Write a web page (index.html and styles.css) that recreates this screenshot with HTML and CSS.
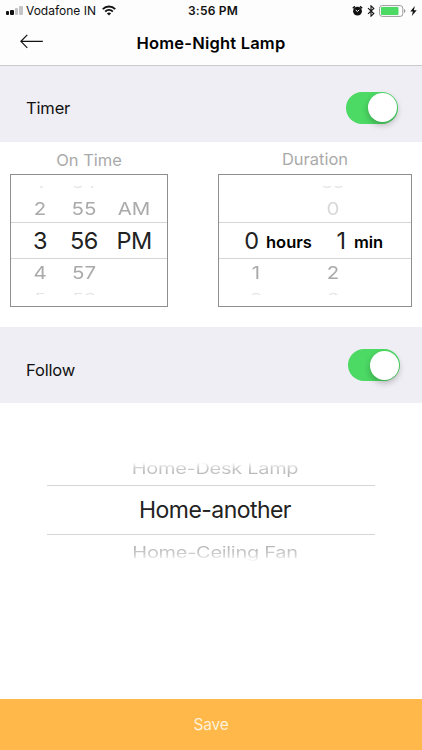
FILE: index.html
```html
<!DOCTYPE html>
<html lang="en">
<head>
<meta charset="utf-8">
<title>Home-Night Lamp</title>
<link rel="stylesheet" href="styles.css">
</head>
<body>
<div class="screen">
  <header class="top">
    <div class="status">
      <div class="status-left">
        <span class="signal"><i></i><i></i><i></i><i></i></span>
        <span class="carrier">Vodafone IN</span>
        <svg class="wifi" width="14" height="11" viewBox="0 0 14 11"><g fill="none" stroke="#111" stroke-width="2"><path d="M.8 4.1a8.9 8.9 0 0 1 12.4 0"/><path d="M3.2 6.6a5.5 5.5 0 0 1 7.6 0"/></g><path d="M7 10.6 4.9 8.5a3 3 0 0 1 4.2 0z" fill="#111"/></svg>
      </div>
      <span class="clock">3:56 PM</span>
      <div class="status-right">
        <svg width="11" height="12" viewBox="0 0 11 12"><circle cx="5.5" cy="6.2" r="4.4" fill="#111"/><path d="M.8 3.3 3 1.4M10.2 3.3 8 1.4" stroke="#111" stroke-width="1.5"/><path d="M3.7 5 5.5 6.5 7.2 4.8" fill="none" stroke="#fff"/></svg>
        <svg width="8" height="12" viewBox="0 0 8 12"><path d="M1 3.2 6.8 8.6 4 11.2V.8l2.8 2.6L1 8.8" fill="none" stroke="#111" stroke-width="1.1"/></svg>
        <svg width="27" height="12" viewBox="0 0 27 12"><rect x=".6" y=".6" width="23.2" height="10.8" rx="2.6" fill="#fff" stroke="#999"/><rect x="2" y="2" width="17.5" height="8" rx="1" fill="#4cd964"/><path d="M25 4.1q1.4.7 1.4 1.9T25 7.9z" fill="#999"/></svg>
        <svg width="7" height="10" viewBox="0 0 7 10"><path d="M4.8 0 .3 5.6h2.6L1.8 10l4.9-5.8H3.9z" fill="#111"/></svg>
      </div>
    </div>
    <div class="nav">
      <svg class="back" width="24" height="15" viewBox="0 0 24 15"><path d="M7.3.8.9 7.3l6.4 6.5M.9 7.3h21.9" fill="none" stroke="#111" stroke-width="1.2"/></svg>
      <h1>Home-Night Lamp</h1>
    </div>
  </header>

  <section class="setting timer"><span>Timer</span><span class="switch"></span></section>

  <main class="pickers">
    <div class="field time">
      <h2>On Time</h2>
      <div class="picker">
        <div class="ghost upper row"><b>1</b><b>54</b><b></b></div>
        <div class="side row above"><b>2</b><b>55</b><b>AM</b></div>
        <div class="now row"><b>3</b><b>56</b><b>PM</b></div>
        <div class="side row below"><b>4</b><b>57</b><b></b></div>
        <div class="ghost lower row"><b>5</b><b>58</b><b></b></div>
      </div>
    </div>
    <div class="field duration">
      <h2>Duration</h2>
      <div class="picker">
        <div class="ghost upper row"><b></b><b>59</b></div>
        <div class="side row above pale"><b></b><b>0</b></div>
        <div class="now row"><b>0</b><strong>hours</strong><b>1</b><strong>min</strong></div>
        <div class="side row below"><b>1</b><b>2</b></div>
        <div class="ghost lower row"><b>2</b><b>3</b></div>
      </div>
    </div>
  </main>

  <section class="setting follow"><span>Follow</span><span class="switch"></span></section>

  <section class="devices">
    <div class="device before"><span>Home-Desk Lamp</span></div>
    <div class="device chosen"><span>Home-another</span></div>
    <div class="device after"><span>Home-Ceiling Fan</span></div>
  </section>

  <footer class="save">Save</footer>
</div>
</body>
</html>
```
FILE: styles.css
```css
* { box-sizing: border-box; }
body { margin: 0; background: #fff; font-family: Inter, "Liberation Sans", sans-serif; color: #111; }
h1, h2 { margin: 0; }
svg { display: block; }
.screen { width: 422px; height: 750px; display: flex; flex-direction: column; overflow: hidden; }

.top { height: 66px; background: #fdfdfd; border-bottom: 1px solid #c9c9ce; }
.status { height: 21px; display: grid; grid-template-columns: 1fr 60px 1fr; align-items: center; padding: 0 5px 0 6px; }
.status-left { display: flex; align-items: center; }
.signal { display: flex; align-items: flex-end; gap: 1px; width: 20px; height: 9px; }
.signal i { width: 3.4px; background: #c4c4c6; border-radius: 1px; }
.signal i:nth-child(1) { height: 4px; background: #111; }
.signal i:nth-child(2) { height: 5.5px; background: #111; }
.signal i:nth-child(3) { height: 7.5px; }
.signal i:nth-child(4) { height: 9px; }
.carrier { font-size: 12px; letter-spacing: 0; white-space: nowrap; }
.wifi { margin-left: 6px; }
.clock { font-size: 12px; font-weight: 600; text-align: center; white-space: nowrap; letter-spacing: .2px; padding-left: 3px; }
.status-right { display: flex; align-items: center; justify-content: flex-end; gap: 4px; }
.nav { height: 44px; display: grid; grid-template-columns: 1fr auto 1fr; align-items: center; }
.back { margin: -4px 0 0 20px; }
h1 { font-size: 16.5px; font-weight: 600; line-height: 20px; color: #000; letter-spacing: .2px; }

.setting { height: 76px; flex: none; background: #efeef4; display: flex; justify-content: space-between; align-items: center; font-size: 16.5px; letter-spacing: -.15px; }
.timer { padding: 8px 24px 0 26px; }
.timer .switch { margin-top: -1px; }
.follow { padding: 9px 22px 0 26px; }
.follow .switch { margin-top: -9px; }
.switch { width: 52px; height: 32px; border-radius: 16px; background: #4cd964; display: flex; justify-content: flex-end; padding: 1.5px; }
.switch::after { content: ""; width: 29px; height: 29px; border-radius: 50%; background: #fff; box-shadow: 0 3px 6px rgba(0,0,0,.25); }

.pickers { height: 185px; flex: none; display: flex; justify-content: space-between; padding: 0 10px; }
.time { width: 158px; }
.duration { width: 194px; }
h2 { height: 32px; font-size: 16.5px; font-weight: 400; line-height: 37px; text-align: center; color: #aaa; }
.duration h2 { line-height: 34px; }
.picker { height: 133px; border: 1px solid #8e8e8e; }
.row { display: grid; }
.row b { font-weight: 400; text-align: center; white-space: nowrap; }
.time .row { grid-template-columns: 44px 44px 56px; padding-left: 7px; }
.duration .row { grid-template-columns: 28px 28px; column-gap: 49px; padding-left: 23px; }
.duration .now { grid-template-columns: 29px 61px 28px 40px; column-gap: 0; padding-left: 18px; }
.now { height: 37px; line-height: 36px; font-size: 23.5px; letter-spacing: -.5px; color: #222; border: solid #d5d5d5; border-width: 1px 0; }
.now strong { font-size: 16.5px; font-weight: 600; color: #000; line-height: 39px; letter-spacing: 0; }
.duration .now strong:last-child { letter-spacing: -.1px; margin-left: -1px; }
.side { height: 33px; line-height: 33px; font-size: 20.5px; color: #aaa; }
.side b { transform: scaleY(.86); }
.above { line-height: 39px; }
.below { line-height: 27px; }
.pale { color: #d8d8d8; }
.ghost { height: 3px; overflow: hidden; font-size: 19px; color: #e4e4e4; }
.upper { margin-top: 11px; line-height: 3px; }
.upper b { transform: translateY(-4px) scaleY(.7); }
.lower { line-height: 3px; }
.lower b { transform: translateY(5px) scaleY(.7); }

.devices { flex: 1; padding: 58px 47px 0; }
.device { text-align: center; white-space: nowrap; }
.device span { display: inline-block; }
.before, .after { height: 24px; line-height: 24px; font-size: 20px; letter-spacing: -.3px; }
.before span, .after span { color: transparent; -webkit-background-clip: text; background-clip: text; }
.before { padding-left: 8px; }
.before span { transform: translateY(-4px) scaleY(.76); margin-top: -6px; background-image: linear-gradient(#fff 3px, #ccc 11px, #b9b9b9 19px); }
.after { padding-left: 8px; }
.after span { transform: scaleY(.76); margin-top: 6px; background-image: linear-gradient(#b8b8b8 5px, #d0d0d0 14px, #f6f6f6 22px); }
.chosen { height: 50px; line-height: 49px; font-size: 23px; letter-spacing: -.55px; padding-left: 8px; color: #222; border: solid #d5d5d5; border-width: 1px 0; }

.save { height: 51px; flex: none; background: #ffb849; color: #fff1d9; text-align: center; line-height: 51px; font-size: 15.5px; letter-spacing: -.2px; }
```
